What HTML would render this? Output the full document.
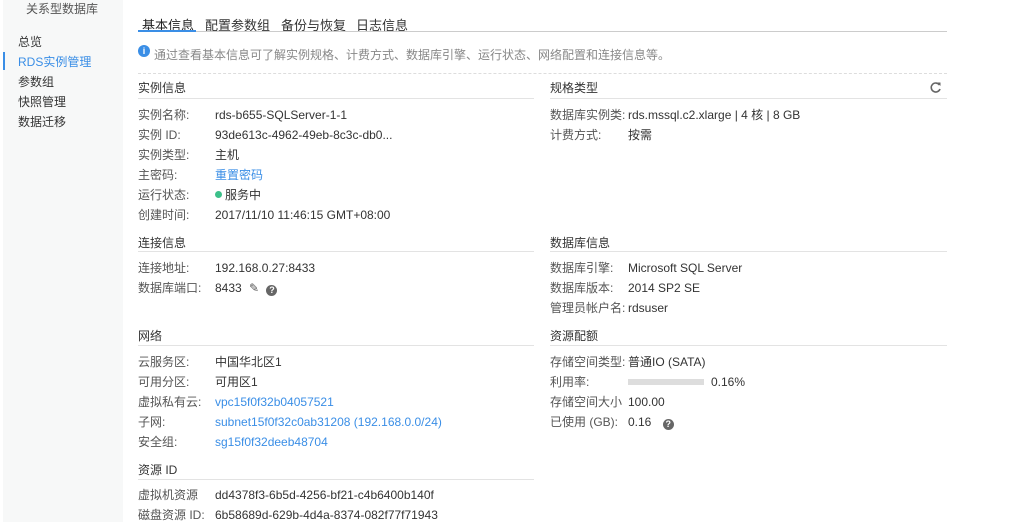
<!DOCTYPE html>
<html><head><meta charset="utf-8"><style>
*{margin:0;padding:0;box-sizing:border-box}
body{width:1016px;height:522px;overflow:hidden;background:#fff;font-family:"Liberation Sans","Noto Sans CJK SC",sans-serif;font-size:12px;color:#333;position:relative}
.a{position:absolute;white-space:nowrap;line-height:14px}
.side{position:absolute;left:3px;top:0;width:120px;height:522px;background:#f7f8f8}
.l{color:#555}
.blue{color:#3a8ee6}
.hl{position:absolute;height:1px;background:#e3e3e3}
.q{display:inline-block;width:11px;height:11px;border-radius:50%;background:#666;color:#fff;font-size:9px;line-height:11px;text-align:center;font-weight:bold;vertical-align:-1px}
</style></head><body>
<div class="side"></div>
<div class="a" style="left:26px;top:2px;color:#555">关系型数据库</div>
<div class="a" style="left:18px;top:35px">总览</div>
<div style="position:absolute;left:3px;top:52px;width:2px;height:18px;background:#3a8ee6"></div>
<div class="a blue" style="left:18px;top:55px">RDS实例管理</div>
<div class="a" style="left:18px;top:75px">参数组</div>
<div class="a" style="left:18px;top:95px">快照管理</div>
<div class="a" style="left:18px;top:115px">数据迁移</div>

<div class="a" style="left:142px;top:19px;font-size:13px;color:#222">基本信息</div>
<div class="a" style="left:205px;top:19px;font-size:13px">配置参数组</div>
<div class="a" style="left:281px;top:19px;font-size:13px">备份与恢复</div>
<div class="a" style="left:356px;top:19px;font-size:13px">日志信息</div>
<div class="hl" style="left:138px;top:31px;width:809px;background:#ccc"></div>
<div style="position:absolute;left:138px;top:30px;width:58px;height:2px;background:#3a8ee6"></div>
<div style="position:absolute;left:138px;top:45px;width:12px;height:12px;border-radius:50%;background:#3a8ee6;color:#fff;font-size:9px;font-weight:bold;text-align:center;line-height:12px">i</div>
<div class="a" style="left:154px;top:48px;color:#888">通过查看基本信息可了解实例规格、计费方式、数据库引擎、运行状态、网络配置和连接信息等。</div>
<div style="position:absolute;left:138px;top:73px;width:809px;border-top:1px dashed #ddd"></div>

<div class="a" style="left:138px;top:81px">实例信息</div>
<div class="hl" style="left:138px;top:98px;width:396px"></div>
<div class="a" style="left:550px;top:81px">规格类型</div>
<div class="hl" style="left:550px;top:98px;width:397px"></div>
<svg style="position:absolute;left:929px;top:81px" width="13" height="13" viewBox="0 0 13 13"><path d="M10.5 4A4.5 4.5 0 1 0 11 8" fill="none" stroke="#666" stroke-width="1.6"/><path d="M8 1.5L11.5 1.5L11.5 5Z" fill="#666"/></svg>

<div class="a l" style="left:138px;top:108px">实例名称:</div><div class="a" style="left:215px;top:108px">rds-b655-SQLServer-1-1</div>
<div class="a l" style="left:138px;top:128px">实例 ID:</div><div class="a" style="left:215px;top:128px">93de613c-4962-49eb-8c3c-db0...</div>
<div class="a l" style="left:138px;top:148px">实例类型:</div><div class="a" style="left:215px;top:148px">主机</div>
<div class="a l" style="left:138px;top:168px">主密码:</div><div class="a blue" style="left:215px;top:168px">重置密码</div>
<div class="a l" style="left:138px;top:188px">运行状态:</div><div class="a" style="left:215px;top:188px"><span style="display:inline-block;width:7px;height:7px;border-radius:50%;background:#3cc08a;margin-right:3px;vertical-align:1px"></span>服务中</div>
<div class="a l" style="left:138px;top:208px">创建时间:</div><div class="a" style="left:215px;top:208px">2017/11/10 11:46:15 GMT+08:00</div>

<div class="a l" style="left:550px;top:108px">数据库实例类:</div><div class="a" style="left:628px;top:108px">rds.mssql.c2.xlarge | 4 核 | 8 GB</div>
<div class="a l" style="left:550px;top:128px">计费方式:</div><div class="a" style="left:628px;top:128px">按需</div>

<div class="a" style="left:138px;top:236px">连接信息</div>
<div class="hl" style="left:138px;top:251px;width:396px"></div>
<div class="a" style="left:550px;top:236px">数据库信息</div>
<div class="hl" style="left:550px;top:251px;width:397px"></div>
<div class="a l" style="left:138px;top:261px">连接地址:</div><div class="a" style="left:215px;top:261px">192.168.0.27:8433</div>
<div class="a l" style="left:138px;top:281px">数据库端口:</div><div class="a" style="left:215px;top:281px">8433 <span style="color:#555;margin-left:4px">✎</span> <span class="q" style="margin-left:4px">?</span></div>
<div class="a l" style="left:550px;top:261px">数据库引擎:</div><div class="a" style="left:628px;top:261px">Microsoft SQL Server</div>
<div class="a l" style="left:550px;top:281px">数据库版本:</div><div class="a" style="left:628px;top:281px">2014 SP2 SE</div>
<div class="a l" style="left:550px;top:301px">管理员帐户名:</div><div class="a" style="left:628px;top:301px">rdsuser</div>

<div class="a" style="left:138px;top:329px">网络</div>
<div class="hl" style="left:138px;top:345px;width:396px"></div>
<div class="a" style="left:550px;top:329px">资源配额</div>
<div class="hl" style="left:550px;top:345px;width:397px"></div>
<div class="a l" style="left:138px;top:355px">云服务区:</div><div class="a" style="left:215px;top:355px">中国华北区1</div>
<div class="a l" style="left:138px;top:375px">可用分区:</div><div class="a" style="left:215px;top:375px">可用区1</div>
<div class="a l" style="left:138px;top:395px">虚拟私有云:</div><div class="a blue" style="left:215px;top:395px">vpc15f0f32b04057521</div>
<div class="a l" style="left:138px;top:415px">子网:</div><div class="a blue" style="left:215px;top:415px">subnet15f0f32c0ab31208 (192.168.0.0/24)</div>
<div class="a l" style="left:138px;top:435px">安全组:</div><div class="a blue" style="left:215px;top:435px">sg15f0f32deeb48704</div>
<div class="a l" style="left:550px;top:355px">存储空间类型:</div><div class="a" style="left:628px;top:355px">普通IO (SATA)</div>
<div class="a l" style="left:550px;top:375px">利用率:</div><div style="position:absolute;left:628px;top:379px;width:76px;height:6px;background:#ddd"></div><div class="a" style="left:711px;top:375px">0.16%</div>
<div class="a l" style="left:550px;top:395px">存储空间大小</div><div class="a" style="left:628px;top:395px">100.00</div>
<div class="a l" style="left:550px;top:415px">已使用 (GB):</div><div class="a" style="left:628px;top:415px">0.16 <span class="q" style="margin-left:8px">?</span></div>

<div class="a" style="left:138px;top:463px">资源 ID</div>
<div class="hl" style="left:138px;top:479px;width:396px"></div>
<div class="a l" style="left:138px;top:488px">虚拟机资源</div><div class="a" style="left:215px;top:488px">dd4378f3-6b5d-4256-bf21-c4b6400b140f</div>
<div class="a l" style="left:138px;top:508px">磁盘资源 ID:</div><div class="a" style="left:215px;top:508px">6b58689d-629b-4d4a-8374-082f77f71943</div>
</body></html>
